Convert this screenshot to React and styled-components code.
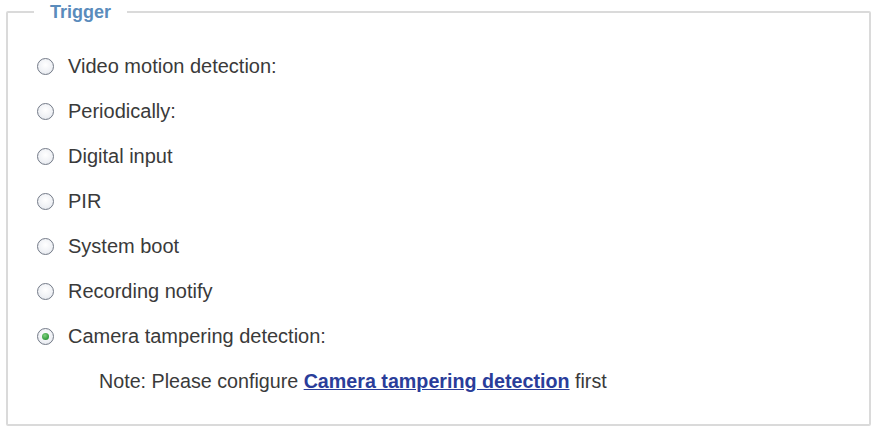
import styled, { createGlobalStyle } from "styled-components"

const triggers = [
    { label: "Video motion detection:" },
    { label: "Periodically:" },
    { label: "Digital input" },
    { label: "PIR" },
    { label: "System boot" },
    { label: "Recording notify" },
    { label: "Camera tampering detection:", checked: true },
]

export default function App() {
    return (
        <>
            <GlobalStyle />
            <Fieldset>
                <Legend>Trigger</Legend>
                {triggers.map((t) => (
                    <Row key={t.label}>
                        <Radio $checked={t.checked} />
                        <Label>{t.label}</Label>
                    </Row>
                ))}
                <Note>
                    Note: Please configure <NoteLink href="#">Camera tampering detection</NoteLink> first
                </Note>
            </Fieldset>
        </>
    )
}

const GlobalStyle = createGlobalStyle`
    body {
        margin: 0;
        background: #ffffff;
        font-family: "Liberation Sans", Arial, sans-serif;
    }
`

const Fieldset = styled.fieldset`
    margin: 2px 5px 0 6px;
    padding: 22px 0 20px 29px;
    border: 2px solid #dadada;
    border-radius: 2px;
    min-width: 0;
`

const Legend = styled.legend`
    padding: 0 16px;
    margin-left: -3px;
    font-size: 18px;
    font-weight: bold;
    line-height: 20px;
    color: #5a8cbc;
`

const Row = styled.div`
    display: flex;
    align-items: center;
    gap: 14px;
    height: 45px;
`

const Radio = styled.span`
    box-sizing: border-box;
    width: 17px;
    height: 17px;
    border-radius: 50%;
    border: 1.6px solid #737a87;
    background: radial-gradient(circle at 50% 40%, #ffffff 0%, #eff1f5 60%, #d9dde4 100%);
    display: flex;
    align-items: center;
    justify-content: center;
    flex-shrink: 0;

    &::after {
        content: "";
        width: 7px;
        height: 7px;
        border-radius: 50%;
        background: radial-gradient(circle at 40% 35%, #7fd07f 0%, #2f9a3a 70%);
        display: ${(p) => (p.$checked ? "block" : "none")};
    }
`

const Label = styled.span`
    font-size: 20px;
    color: #3a3a3a;
`

const Note = styled.div`
    display: flex;
    align-items: center;
    height: 45px;
    padding-left: 62px;
    font-size: 19.7px;
    color: #3a3a3a;
    white-space: pre;
`

const NoteLink = styled.a`
    color: #2a3d9a;
    font-weight: bold;
    text-decoration: underline;
`
